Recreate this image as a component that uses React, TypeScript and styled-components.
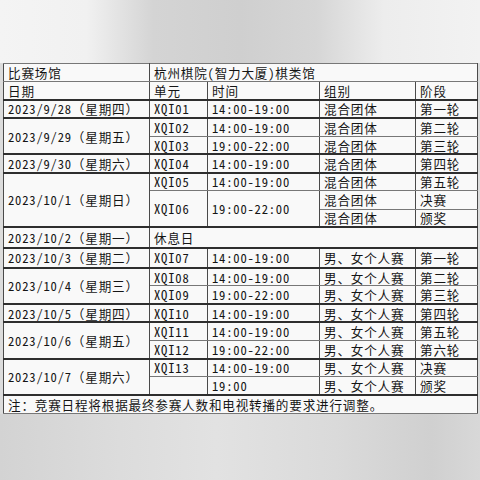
import React from 'react';
import styled, { createGlobalStyle } from 'styled-components';

interface Session {
  unit?: string;
  unitSpan?: number;
  time?: string;
  timeSpan?: number;
  group: string;
  stage: string;
  noUnit?: boolean;
  noTime?: boolean;
}

interface Day {
  date: string;
  rest?: boolean;
  height?: number;
  sessions: Session[];
}

const TEAM = '混合团体';
const SOLO = '男、女个人赛';
const DAY = '14:00-19:00';
const NIGHT = '19:00-22:00';

const days: Day[] = [
  { date: '2023/9/28（星期四）', sessions: [{ unit: 'XQI01', time: DAY, group: TEAM, stage: '第一轮' }] },
  {
    date: '2023/9/29（星期五）',
    sessions: [
      { unit: 'XQI02', time: DAY, group: TEAM, stage: '第二轮' },
      { unit: 'XQI03', time: NIGHT, group: TEAM, stage: '第三轮' },
    ],
  },
  { date: '2023/9/30（星期六）', sessions: [{ unit: 'XQI04', time: DAY, group: TEAM, stage: '第四轮' }] },
  {
    date: '2023/10/1（星期日）',
    sessions: [
      { unit: 'XQI05', time: DAY, group: TEAM, stage: '第五轮' },
      { unit: 'XQI06', unitSpan: 2, time: NIGHT, timeSpan: 2, group: TEAM, stage: '决赛' },
      { noUnit: true, noTime: true, group: TEAM, stage: '颁奖' },
    ],
  },
  { date: '2023/10/2（星期一）', rest: true, height: 21, sessions: [] },
  { date: '2023/10/3（星期二）', height: 19.5, sessions: [{ unit: 'XQI07', time: DAY, group: SOLO, stage: '第一轮' }] },
  {
    date: '2023/10/4（星期三）',
    sessions: [
      { unit: 'XQI08', time: DAY, group: SOLO, stage: '第二轮' },
      { unit: 'XQI09', time: NIGHT, group: SOLO, stage: '第三轮' },
    ],
  },
  { date: '2023/10/5（星期四）', sessions: [{ unit: 'XQI10', time: DAY, group: SOLO, stage: '第四轮' }] },
  {
    date: '2023/10/6（星期五）',
    sessions: [
      { unit: 'XQI11', time: DAY, group: SOLO, stage: '第五轮' },
      { unit: 'XQI12', time: NIGHT, group: SOLO, stage: '第六轮' },
    ],
  },
  {
    date: '2023/10/7（星期六）',
    sessions: [
      { unit: 'XQI13', time: DAY, group: SOLO, stage: '决赛' },
      { unit: '', time: '19:00', group: SOLO, stage: '颁奖' },
    ],
  },
];

const GlobalStyle = createGlobalStyle`
  html, body {
    margin: 0;
    padding: 0;
  }
  body {
    width: 480px;
    height: 480px;
    overflow: hidden;
  }
`;

function App() {
  return (
    <Page>
      <GlobalStyle />
      <Schedule>
        <colgroup>
          <col style={{ width: 146 }} />
          <col style={{ width: 58 }} />
          <col style={{ width: 112 }} />
          <col style={{ width: 96 }} />
          <col style={{ width: 62 }} />
        </colgroup>
        <tbody>
          <Row>
            <Cell>比赛场馆</Cell>
            <Cell colSpan={4}>杭州棋院(智力大厦)棋类馆</Cell>
          </Row>
          <Row>
            <Cell>日期</Cell>
            <Cell>单元</Cell>
            <Cell>时间</Cell>
            <Cell>组别</Cell>
            <Cell>阶段</Cell>
          </Row>

          {days.map(day =>
            day.rest ? (
              <Row key={day.date} $top $height={day.height}>
                <Cell>{day.date}</Cell>
                <Cell colSpan={4}>休息日</Cell>
              </Row>
            ) : (
              day.sessions.map((s, i) => (
                <Row key={day.date + i} $top={i === 0} $height={day.height}>
                  {i === 0 && <Cell rowSpan={day.sessions.length}>{day.date}</Cell>}
                  {!s.noUnit && <Cell rowSpan={s.unitSpan}>{s.unit}</Cell>}
                  {!s.noTime && <Cell rowSpan={s.timeSpan}>{s.time}</Cell>}
                  <Cell>{s.group}</Cell>
                  <Cell>{s.stage}</Cell>
                </Row>
              ))
            )
          )}

          <Row $top>
            <Note colSpan={5}>注：竞赛日程将根据最终参赛人数和电视转播的要求进行调整。</Note>
          </Row>
        </tbody>
      </Schedule>
    </Page>
  );
}

const Page = styled.div`
  width: 480px;
  height: 480px;
  box-sizing: border-box;
  padding: 63px 3px 0 3px;
  background:
    linear-gradient(
        90deg,
        #f4f4f4 0%,
        #f1f1f1 18%,
        #d4d4d4 32%,
        #cfcfcf 50%,
        #d6d6d6 66%,
        #ededed 80%,
        #f2f2f2 100%
      )
      top / 100% 63px no-repeat,
    linear-gradient(
        90deg,
        #d3d3d3 0%,
        #dcdcdc 25%,
        #e2e2e2 45%,
        #dadada 70%,
        #d0d0d0 90%,
        #d8d8d8 100%
      )
      bottom / 100% 66px no-repeat,
    #dcdcdc;
`;

const Schedule = styled.table`
  width: 474px;
  table-layout: fixed;
  border-collapse: collapse;
  background: #f9f9f9;
  border: 1px solid #555;
  font-family: 'Noto Sans Mono CJK SC', 'Noto Sans CJK SC', sans-serif;
  font-size: 12.6px;
  letter-spacing: 0.8px;
  color: #151515;
`;

const Row = styled.tr<{ $top?: boolean; $height?: number }>`
  height: ${p => p.$height ?? 18.2}px;

  & > td {
    border-top: ${p => (p.$top ? '2px solid #2e2e2e' : '1px solid #777')};
  }
`;

const Cell = styled.td`
  border-left: 1px solid #4a4a4a;
  border-right: 1px solid #4a4a4a;
  border-bottom: 1px solid #777;
  padding: 0 2px 0 4px;
  line-height: 15px;
  white-space: nowrap;
  overflow: hidden;
  vertical-align: middle;
`;

const Note = styled(Cell)`
  letter-spacing: 0.8px;
`;

export default App;
